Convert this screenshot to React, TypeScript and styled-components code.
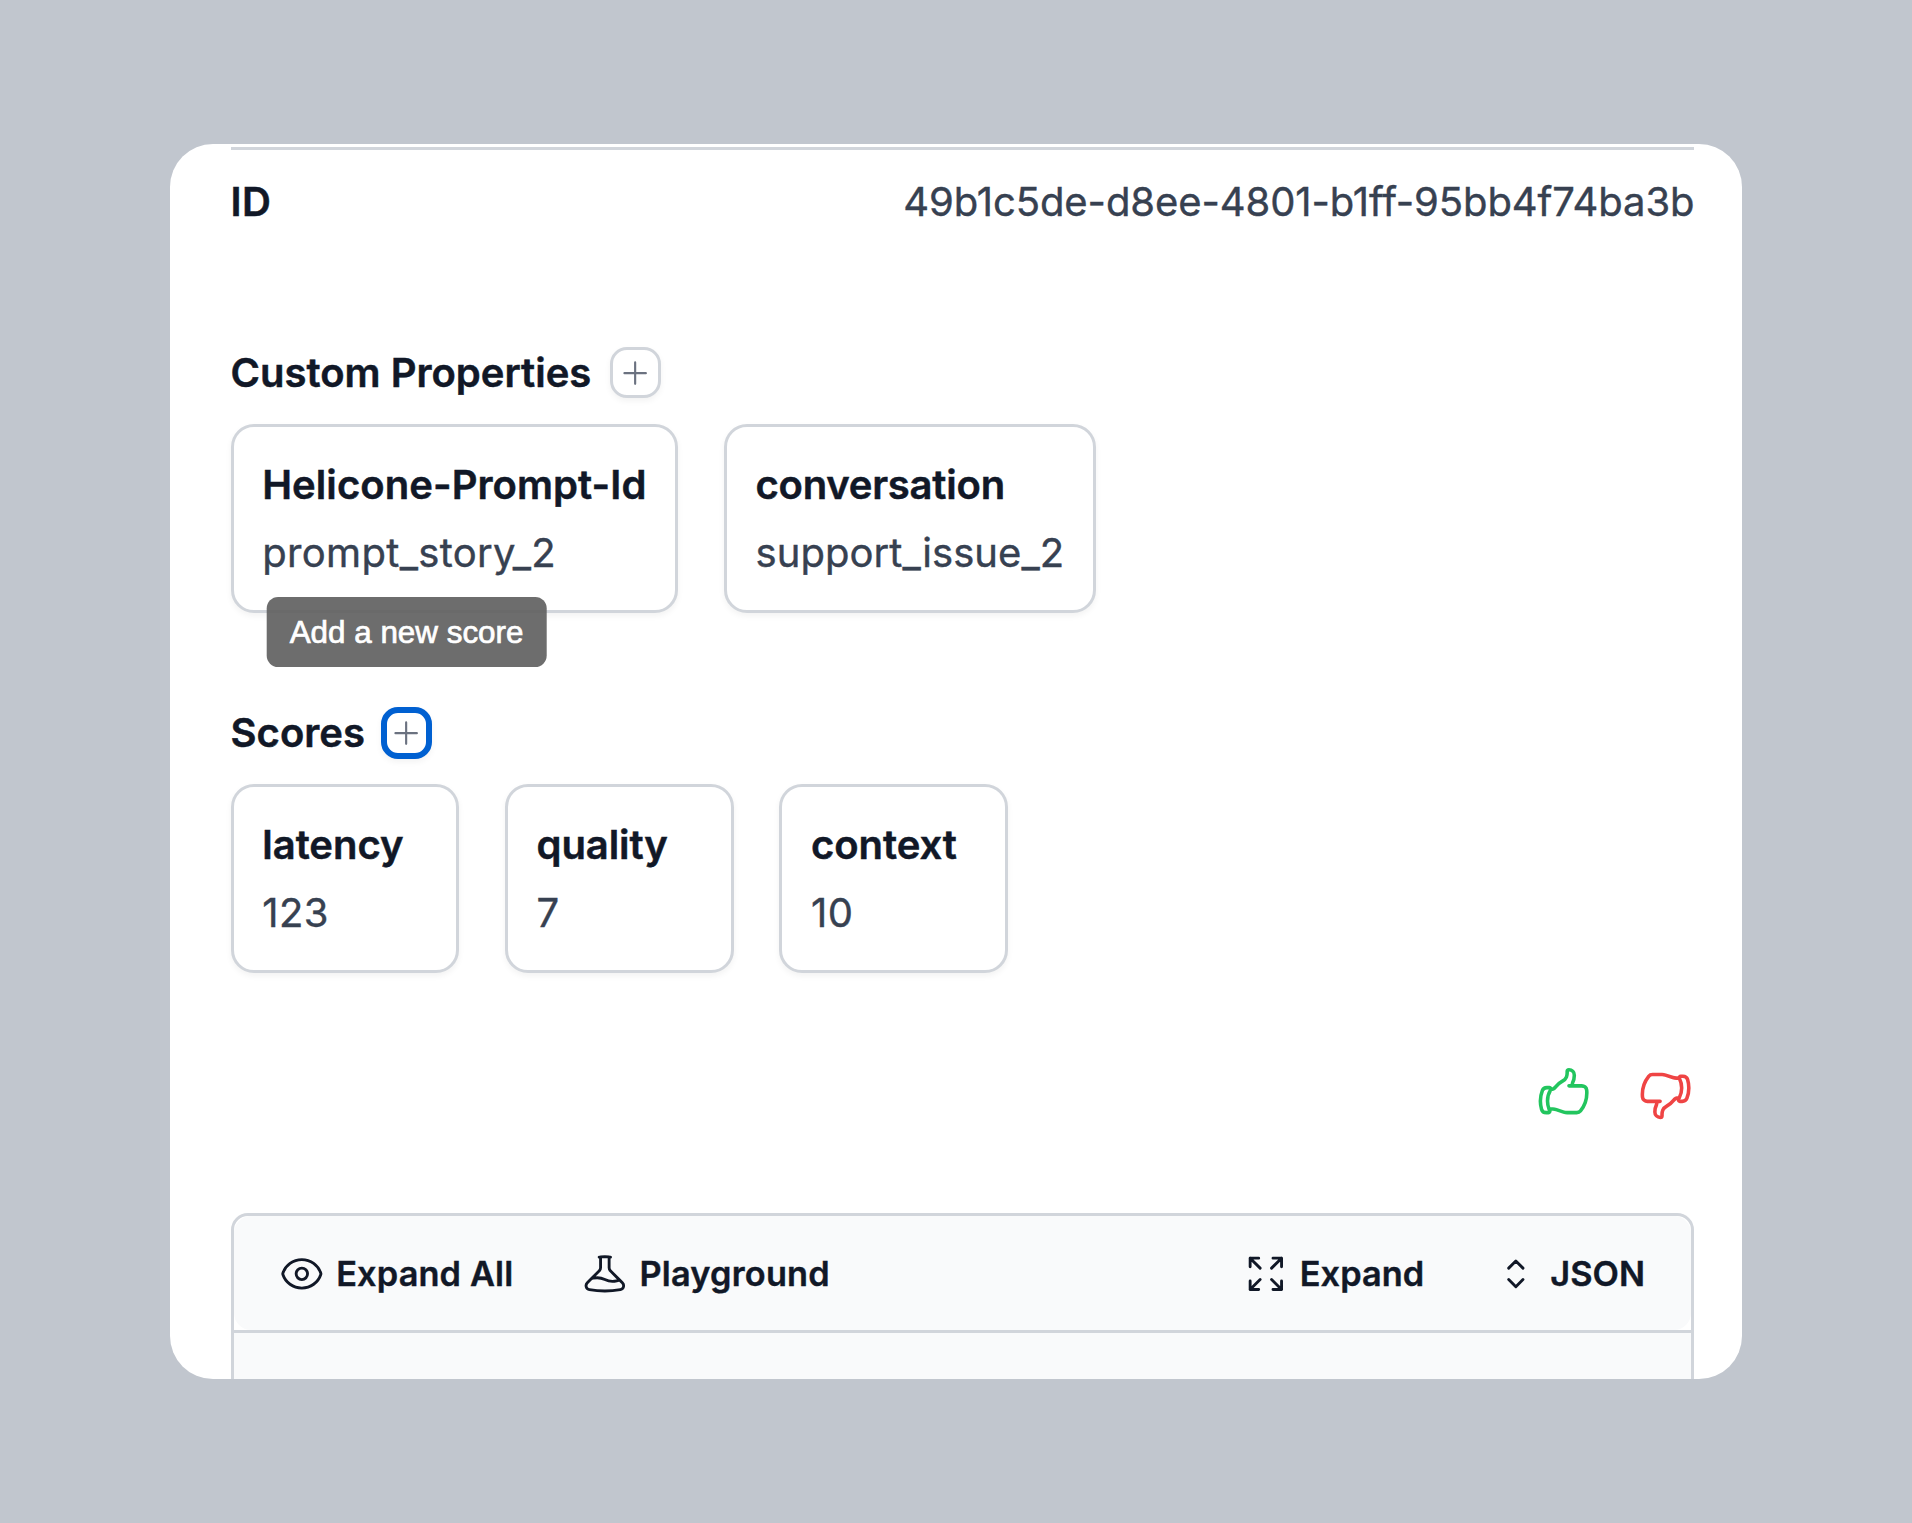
import React from "react";
import styled, { createGlobalStyle } from "styled-components";
import {
  HiOutlineArrowsPointingOut,
  HiOutlineBeaker,
  HiOutlineChevronUpDown,
  HiOutlineEye,
  HiOutlineHandThumbDown,
  HiOutlineHandThumbUp,
  HiOutlinePlus,
} from "react-icons/hi2";

const color = {
  backdrop: "#c1c6ce",
  ink: "#111827",
  body: "#374151",
  muted: "#6b7280",
  line: "#d1d5db",
  subtle: "#f9fafb",
  focus: "#0060d1",
  good: "#22c55e",
  bad: "#ef4444",
};

const GlobalStyle = createGlobalStyle`
  *, *::before, *::after { box-sizing: border-box; }
  body {
    margin: 0;
    background: ${color.backdrop};
    font-family: Inter, "Liberation Sans", sans-serif;
    font-optical-sizing: none;
    -webkit-font-smoothing: antialiased;
  }
  button { font: inherit; color: inherit; margin: 0; padding: 0; border: 0; background: none; }
  svg { display: block; flex: none; }
`;

const Page = styled.main`
  height: 1523px;
  padding: 144px 170px;
  background: ${color.backdrop};
`;

const Panel = styled.section`
  height: 1235px;
  padding: 3px 47.6px 0 60.6px;
  border-radius: 43px;
  background: #fff;
  overflow: hidden;
`;

const IdRow = styled.div`
  display: flex;
  justify-content: space-between;
  padding-top: 22.9px;
  border-top: 3px solid ${color.line};
  font-size: 40px;
  line-height: 57.2px;
`;

const Strong = styled.span<{ $tracking?: number }>`
  font-weight: 600;
  -webkit-text-stroke: 0.5px currentColor;
  letter-spacing: ${(p) => p.$tracking ?? 0}px;
  color: ${color.ink};
`;

const Value = styled.span<{ $tracking?: number }>`
  -webkit-text-stroke: 0.4px currentColor;
  letter-spacing: ${(p) => p.$tracking ?? 0}px;
  color: ${color.body};
`;

const Group = styled.section<{ $space: number }>`
  display: flex;
  flex-direction: column;
  gap: 23px;
  margin-top: ${(p) => p.$space}px;
`;

const GroupHeader = styled.header<{ $gap: number }>`
  display: flex;
  align-items: center;
  gap: ${(p) => p.$gap}px;
  height: 57.2px;
`;

const Heading = styled.h2`
  margin: 0;
  font-size: 40px;
  line-height: 57.2px;
  font-weight: 600;
  -webkit-text-stroke: 0.5px currentColor;
  color: ${color.ink};
`;

const AddWrap = styled.div`
  position: relative;
  padding-top: 1px;
`;

const AddButton = styled.button<{ $focused?: boolean }>`
  display: flex;
  align-items: center;
  justify-content: center;
  width: 51.4px;
  height: 51.4px;
  border: ${(p) => (p.$focused ? `6px solid ${color.focus}` : `3px solid ${color.line}`)};
  border-radius: 17px;
  background: #fff;
  color: ${color.muted};
  box-shadow: 0 3px 6px rgba(0, 0, 0, 0.05);
`;

const Tooltip = styled.div`
  position: absolute;
  bottom: calc(100% + 39px);
  left: 50%;
  transform: translateX(-50%);
  width: 280.6px;
  height: 70px;
  border-radius: 11.4px;
  background: rgba(97, 97, 97, 0.92);
  color: #fff;
  font-family: "Liberation Sans", Arial, sans-serif;
  font-size: 31.4px;
  font-weight: 500;
  line-height: 71px;
  text-align: center;
  white-space: nowrap;
  -webkit-text-stroke: 0.7px #fff;
  z-index: 1;
`;

const Cards = styled.div`
  display: flex;
  gap: 45.8px;
`;

const CardBox = styled.article`
  display: flex;
  flex-direction: column;
  gap: 11.4px;
  min-width: 228.6px;
  height: 189px;
  padding: 28.8px 28.6px;
  border: 3px solid ${color.line};
  border-radius: 23px;
  background: #fff;
  font-size: 40px;
  line-height: 57.2px;
  white-space: nowrap;
  box-shadow: 0 3px 6px rgba(0, 0, 0, 0.05);
`;

const Feedback = styled.div`
  display: flex;
  justify-content: flex-end;
  gap: 45.4px;
  margin-top: 92px;
`;

const ThumbButton = styled.button<{ $tone: string }>`
  color: ${(p) => p.$tone};
`;

const Viewer = styled.section`
  margin-top: 91px;
  height: 240px;
  border: 3px solid ${color.line};
  border-radius: 17px;
  overflow: hidden;
`;

const Toolbar = styled.div`
  display: flex;
  align-items: center;
  justify-content: space-between;
  height: 114px;
  padding: 1px 46.3px 0 45.5px;
  border-radius: 17px;
  background: ${color.subtle};
`;

const Actions = styled.div`
  display: flex;
  gap: 69px;
`;

const Action = styled.button<{ $tracking?: number }>`
  display: flex;
  align-items: center;
  gap: 11.4px;
  font-size: 34.3px;
  line-height: 45.7px;
  font-weight: 600;
  -webkit-text-stroke: 0.4px currentColor;
  letter-spacing: ${(p) => p.$tracking ?? 0.06}px;
  color: ${color.ink};

  svg { -webkit-text-stroke: 0; }
`;

const ViewerBody = styled.div`
  height: 140px;
  border-top: 3px solid ${color.line};
  background: ${color.subtle};
`;

type Entry = {
  name: string;
  value: string;
  nameTracking?: number;
  valueTracking?: number;
};

const properties: Entry[] = [
  {
    name: "Helicone-Prompt-Id",
    value: "prompt_story_2",
    nameTracking: 0.07,
    valueTracking: 0.33,
  },
  {
    name: "conversation",
    value: "support_issue_2",
    nameTracking: -0.22,
    valueTracking: 0.08,
  },
];

const scores: Entry[] = [
  { name: "latency", value: "123", nameTracking: 0, valueTracking: 0.5 },
  { name: "quality", value: "7", nameTracking: -0.1 },
  { name: "context", value: "10", nameTracking: -0.05, valueTracking: 0.6 },
];

function CardList({ items }: { items: Entry[] }) {
  return (
    <Cards>
      {items.map((item) => (
        <CardBox key={item.name}>
          <Strong $tracking={item.nameTracking}>{item.name}</Strong>
          <Value $tracking={item.valueTracking}>{item.value}</Value>
        </CardBox>
      ))}
    </Cards>
  );
}

export default function App() {
  return (
    <>
      <GlobalStyle />
      <Page>
        <Panel>
          <IdRow>
            <Strong $tracking={0.4}>ID</Strong>
            <Value $tracking={-0.09}>49b1c5de-d8ee-4801-b1ff-95bb4f74ba3b</Value>
          </IdRow>

          <Group $space={113.5}>
            <GroupHeader $gap={18.6}>
              <Heading>Custom Properties</Heading>
              <AddWrap>
                <AddButton>
                  <HiOutlinePlus size={34.3} />
                </AddButton>
              </AddWrap>
            </GroupHeader>
            <CardList items={properties} />
          </Group>

          <Group $space={91}>
            <GroupHeader $gap={16}>
              <Heading>Scores</Heading>
              <AddWrap>
                <Tooltip>Add a new score</Tooltip>
                <AddButton $focused>
                  <HiOutlinePlus size={34.3} />
                </AddButton>
              </AddWrap>
            </GroupHeader>
            <CardList items={scores} />
          </Group>

          <Feedback>
            <ThumbButton $tone={color.good}>
              <HiOutlineHandThumbUp size={57.2} />
            </ThumbButton>
            <ThumbButton $tone={color.bad}>
              <HiOutlineHandThumbDown size={57.2} />
            </ThumbButton>
          </Feedback>

          <Viewer>
            <Toolbar>
              <Actions>
                <Action $tracking={0.15}>
                  <HiOutlineEye size={45.7} />
                  Expand All
                </Action>
                <Action $tracking={0.22}>
                  <HiOutlineBeaker size={45.7} />
                  Playground
                </Action>
              </Actions>
              <Actions>
                <Action>
                  <HiOutlineArrowsPointingOut size={45.7} />
                  Expand
                </Action>
                <Action>
                  <HiOutlineChevronUpDown size={45.7} />
                  JSON
                </Action>
              </Actions>
            </Toolbar>
            <ViewerBody />
          </Viewer>
        </Panel>
      </Page>
    </>
  );
}
